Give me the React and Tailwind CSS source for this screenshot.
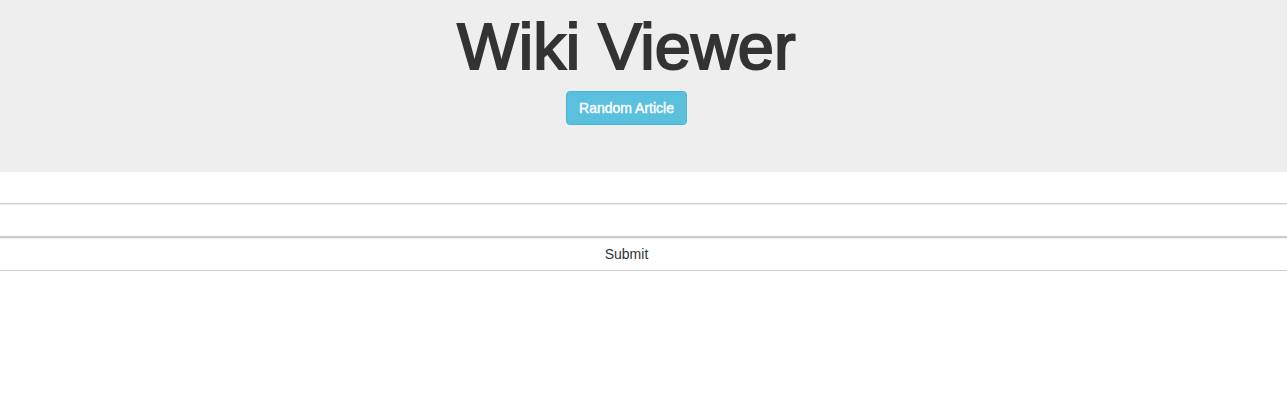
import React, { useState } from "react";

const App = () => {
  const [query, setQuery] = useState("");

  return (
    <div className="min-h-screen bg-white font-['Liberation_Sans',Arial,sans-serif] text-[#333]">
      {/* Header */}
      <div className="h-[172px] bg-[#eeeeee] pt-[12px] pr-[34px] flex flex-col items-center">
        <h1 className="text-[65px] leading-[70px] h-[70px] font-normal text-[#333] [-webkit-text-stroke:2px_#333]">
          Wiki Viewer
        </h1>
        <button className="mt-[9px] h-[34px] px-[12px] bg-[#5bc0de] border border-[#46b8da] rounded-[4px] text-white text-[14px] leading-[20px] [-webkit-text-stroke:0.4px_#ffffff]">
          Random Article
        </button>
      </div>

      {/* Search form */}
      <form className="pt-[31px]" onSubmit={(e) => e.preventDefault()}>
        <input
          type="text"
          value={query}
          onChange={(e) => setQuery(e.target.value)}
          className="block w-full h-[34px] border-y border-[#cccccc] shadow-[inset_0_1px_1px_rgba(0,0,0,0.075)] px-3 text-[14px] outline-none"
        />
        <button
          type="submit"
          className="block w-full h-[34px] pr-[34px] border-y border-[#cccccc] shadow-[inset_0_1px_1px_rgba(0,0,0,0.05)] text-[14px] leading-[20px] text-[#333] bg-white"
        >
          Submit
        </button>
      </form>
    </div>
  );
};

export default App;
